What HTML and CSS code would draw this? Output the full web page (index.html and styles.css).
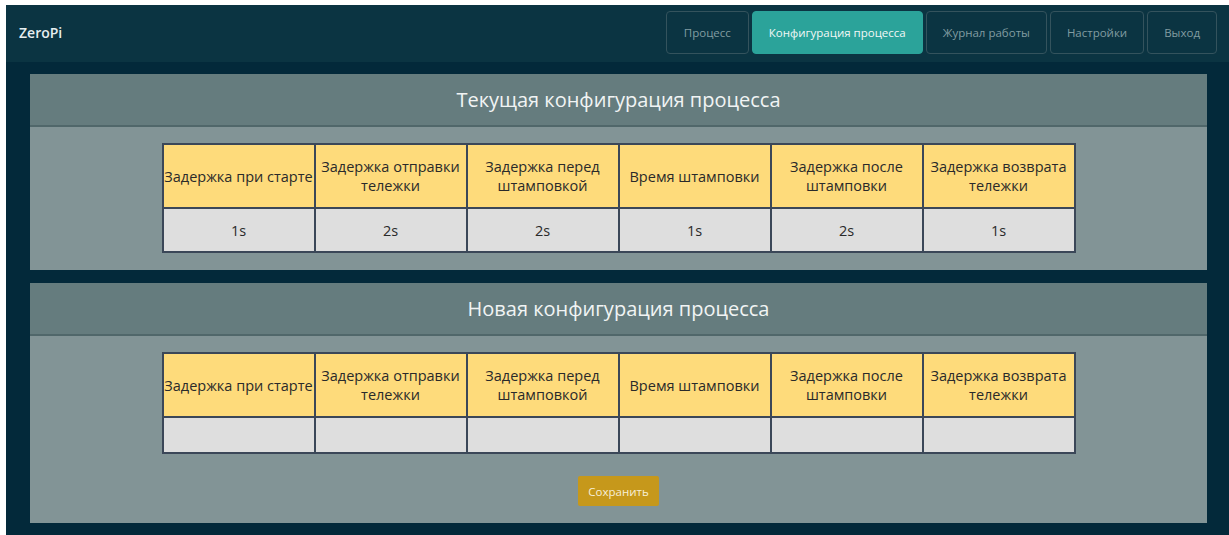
FILE: index.html
```html
<!DOCTYPE html>
<html lang="ru">
<head>
<meta charset="utf-8">
<title>ZeroPi — Конфигурация процесса</title>
<link rel="stylesheet" href="styles.css">
</head>
<body>
<div class="app">
  <header class="navbar">
    <div class="brand">ZeroPi</div>
    <nav class="nav">
      <a class="nav-btn">Процесс</a>
      <a class="nav-btn active">Конфигурация процесса</a>
      <a class="nav-btn">Журнал работы</a>
      <a class="nav-btn">Настройки</a>
      <a class="nav-btn">Выход</a>
    </nav>
  </header>

  <main class="content">
    <section class="panel">
      <h2 class="panel-title">Текущая конфигурация процесса</h2>
      <div class="panel-body">
        <table class="cfg">
          <tr class="head">
            <th>Задержка при старте</th>
            <th>Задержка отправки тележки</th>
            <th>Задержка перед штамповкой</th>
            <th>Время штамповки</th>
            <th>Задержка после штамповки</th>
            <th>Задержка возврата тележки</th>
          </tr>
          <tr class="vals">
            <td>1s</td>
            <td>2s</td>
            <td>2s</td>
            <td>1s</td>
            <td>2s</td>
            <td>1s</td>
          </tr>
        </table>
      </div>
    </section>

    <section class="panel">
      <h2 class="panel-title">Новая конфигурация процесса</h2>
      <div class="panel-body">
        <table class="cfg">
          <tr class="head">
            <th>Задержка при старте</th>
            <th>Задержка отправки тележки</th>
            <th>Задержка перед штамповкой</th>
            <th>Время штамповки</th>
            <th>Задержка после штамповки</th>
            <th>Задержка возврата тележки</th>
          </tr>
          <tr class="inputs">
            <td></td>
            <td></td>
            <td></td>
            <td></td>
            <td></td>
            <td></td>
          </tr>
        </table>
        <button class="save-btn">Сохранить</button>
      </div>
    </section>
  </main>
</div>
</body>
</html>
```

FILE: styles.css
```css
html, body {
  margin: 0;
  padding: 0;
  background: #ffffff;
}

body {
  padding: 5px 0 0 6px;
  font-family: "Open Sans", "Noto Sans", sans-serif;
}

.app {
  background: #03293a;
  height: 530px;
  display: flex;
  flex-direction: column;
}

/* top bar */
.navbar {
  height: 57px;
  background: #0b3442;
  display: flex;
  align-items: flex-start;
  justify-content: space-between;
  padding: 6px 12px 0 13px;
  box-sizing: border-box;
}

.brand {
  color: #e6eef0;
  font-size: 14px;
  font-weight: 600;
  line-height: 44px;
}

.nav {
  display: flex;
  gap: 3px;
}

.nav-btn {
  height: 43px;
  box-sizing: border-box;
  padding: 0 16px;
  display: flex;
  align-items: center;
  font-size: 11.5px;
  color: #819ca1;
  border: 1px solid #34535d;
  border-radius: 4px;
  background: #0b3442;
}

.nav-btn:first-child {
  padding: 0 17px;
}

.nav-btn.active {
  background: #2ba39a;
  border-color: #2ba39a;
  color: #f2f8f7;
}

/* panels */
.content {
  padding: 12px 22px 0 24px;
  display: flex;
  flex-direction: column;
  gap: 13px;
}

.panel {
  background: #829496;
}

.panel-title {
  margin: 0;
  height: 53px;
  box-sizing: border-box;
  background: #657c7e;
  border-bottom: 2px solid #50676a;
  color: #f1f4f4;
  font-size: 20px;
  font-weight: 400;
  display: flex;
  align-items: center;
  justify-content: center;
}

.panel-body {
  padding: 16px 0 17px;
  display: flex;
  flex-direction: column;
  align-items: center;
}

/* config tables */
.cfg {
  border-collapse: collapse;
  table-layout: fixed;
  width: 914px;
}

.cfg th,
.cfg td {
  border: 2px solid #3b4758;
  text-align: center;
  color: #2a2a2a;
  font-size: 14.5px;
  padding: 0;
}

.cfg th {
  background: #fedb7b;
  font-weight: 400;
  height: 62px;
  line-height: 19px;
}

.cfg .vals td {
  background: #dedede;
  height: 42px;
}

.cfg .inputs td {
  background: #dedede;
  height: 34px;
}

.save-btn {
  margin-top: 22px;
  width: 81px;
  height: 30px;
  border: none;
  border-radius: 2px;
  background: #c6981b;
  color: #f7efd8;
  font-family: "Open Sans", "Noto Sans", sans-serif;
  font-size: 11.5px;
  padding: 0;
}
```
